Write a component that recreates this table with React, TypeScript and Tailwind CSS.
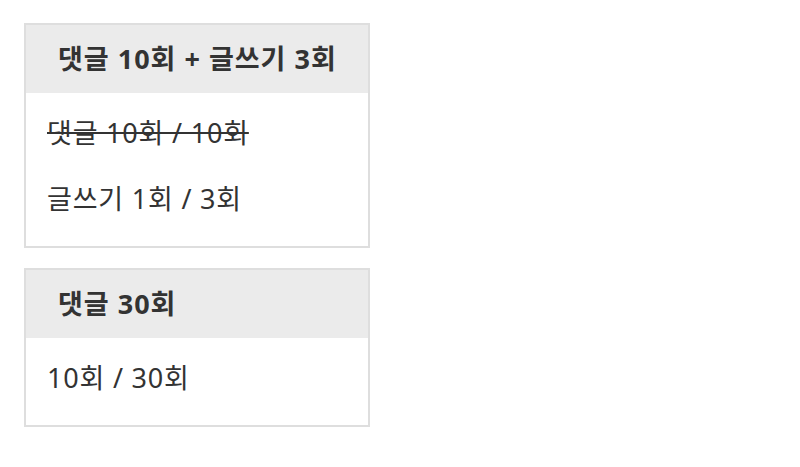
import React from "react";

const font = { fontFamily: '"Noto Sans", "Noto Sans CJK KR", sans-serif' };

function Card({ title, rows }: { title: string; rows: { text: string; done?: boolean }[] }) {
  return (
    <div className="w-[346px] border-2 border-[#dedede] bg-white">
      <div className="h-[68px] flex items-center bg-[#ebebeb] pl-[32px] text-[27px] font-bold tracking-[1px] text-[#333333]">
        {title}
      </div>
      <div className="flex flex-col gap-[30px] pl-[21px] pt-[22px] pb-[29px]">
        {rows.map((r, i) => (
          <div
            key={i}
            className={
              "h-[36px] leading-[36px] text-[27px] tracking-[0.8px] text-[#333333] " +
              (r.done ? "line-through" : "")
            }
          >
            {r.text}
          </div>
        ))}
      </div>
    </div>
  );
}

export default function App() {
  return (
    <div className="min-h-[467px] w-[800px] bg-white pl-[24px] pt-[23px] flex flex-col gap-[20px]" style={font}>
      <Card
        title="댓글 10회 + 글쓰기 3회"
        rows={[
          { text: "댓글 10회 / 10회", done: true },
          { text: "글쓰기 1회 / 3회" },
        ]}
      />
      <Card title="댓글 30회" rows={[{ text: "10회 / 30회" }]} />
    </div>
  );
}
